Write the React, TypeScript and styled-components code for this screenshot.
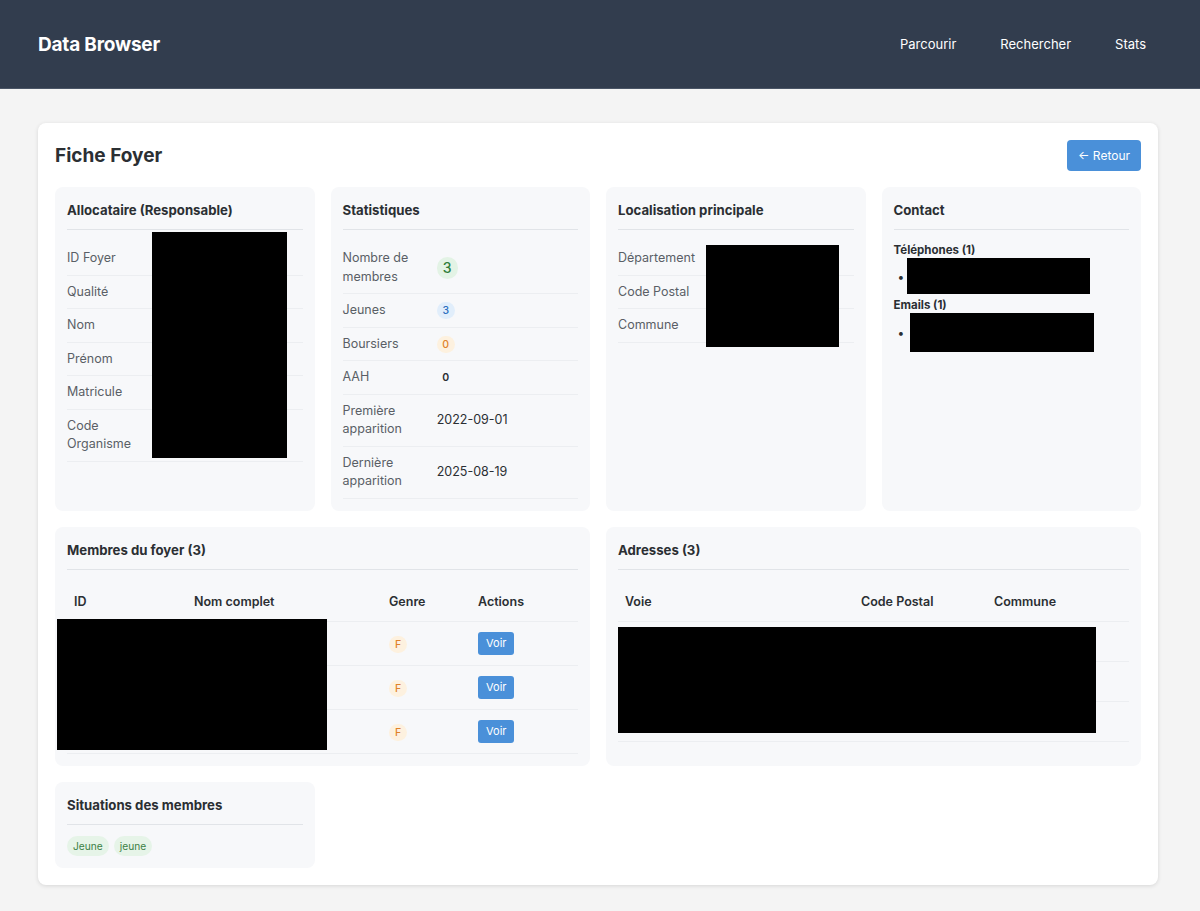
import React from 'react'
import styled, { createGlobalStyle } from 'styled-components'

const GlobalStyle = createGlobalStyle`
  * { box-sizing: border-box; }
  body {
    margin: 0;
    background: #f4f4f4;
    font-family: Inter, "Noto Sans", "Liberation Sans", sans-serif;
    color: #2b2f33;
  }
`

const TopBar = styled.header`
  height: 89px;
  background: #323d4e;
  border-bottom: 1px solid #4a5566;
  display: flex;
  align-items: center;
  justify-content: space-between;
  padding: 0 38px;
`

const Brand = styled.h1`
  margin: 0;
  font-size: 19px;
  font-weight: 700;
  color: #fff;
  letter-spacing: -0.2px;
`

const Nav = styled.nav`
  display: flex;
  gap: 12px;
`

const NavLink = styled.a`
  color: #fff;
  font-size: 13px;
  padding: 8px 16px;
  text-decoration: none;
`

const Main = styled.main`
  padding: 34px 42px 27px 38px;
`

const Sheet = styled.section`
  background: #fff;
  border-radius: 8px;
  box-shadow: 0 1px 4px rgba(0, 0, 0, 0.12);
  padding: 17px;
`

const SheetHead = styled.div`
  display: flex;
  align-items: center;
  justify-content: space-between;
  margin-bottom: 16px;
`

const SheetTitle = styled.h2`
  margin: 0;
  font-size: 19px;
  font-weight: 700;
  color: #2b2f33;
`

const BackButton = styled.button`
  height: 31px;
  padding: 0 11px;
  border: none;
  border-radius: 4px;
  background: #4a90d9;
  color: #fff;
  font-family: inherit;
  font-size: 12px;
`

const Grid = styled.div`
  display: grid;
  grid-template-columns: repeat(4, 1fr);
  gap: 16px;
  align-items: stretch;
`

const Card = styled.div<{ $span?: number }>`
  position: relative;
  grid-column: span ${p => p.$span ?? 1};
  background: #f7f8fa;
  border-radius: 8px;
  padding: 13px 12px 12px;
`

const CardTitle = styled.h3`
  margin: 0 0 12px;
  padding-bottom: 8px;
  border-bottom: 1px solid #e1e4e8;
  font-size: 13.2px;
  line-height: 21px;
  font-weight: 700;
  color: #2b2f33;
`

const InfoTable = styled.table`
  width: 100%;
  border-collapse: collapse;
  font-size: 12.5px;
  line-height: 18.5px;

  tr { border-bottom: 1px solid #eceef1; }
  th {
    width: 40%;
    padding: 7px 8px 7px 0;
    text-align: left;
    font-weight: 400;
    color: #5a5f66;
    vertical-align: middle;
  }
  td {
    padding: 7px 0;
    color: #2b2f33;
    vertical-align: middle;
  }
`

const tones = {
  green: { bg: '#e3f3e5', fg: '#2f7d3a' },
  blue: { bg: '#e1eefb', fg: '#2c6fc0' },
  orange: { bg: '#fdf1df', fg: '#e0822a' },
  plain: { bg: 'transparent', fg: '#2b2f33' },
}

const Badge = styled.span<{ $tone: keyof typeof tones; $big?: boolean }>`
  display: inline-block;
  min-width: ${p => (p.$big ? 21 : 18)}px;
  padding: ${p => (p.$big ? '1px 6px' : '0 5px')};
  border-radius: 11px;
  text-align: center;
  background: ${p => tones[p.$tone].bg};
  color: ${p => tones[p.$tone].fg};
  font-size: ${p => (p.$big ? 14 : 10.5)}px;
  line-height: ${p => (p.$big ? 20 : 17)}px;
  font-weight: ${p => (p.$tone === 'plain' ? 600 : 500)};
`

const Redacted = styled.div<{ $l: number; $t: number; $w: number; $h: number }>`
  position: absolute;
  left: ${p => p.$l}px;
  top: ${p => p.$t}px;
  width: ${p => p.$w}px;
  height: ${p => p.$h}px;
  background: #000;
`

const ContactLabel = styled.div`
  margin-top: 3px;
  font-size: 11.5px;
  font-weight: 700;
  line-height: 16px;
  color: #2b2f33;
`

const ContactList = styled.ul`
  list-style: none;
  margin: 0 0 2px;
  padding: 0;
`

const ContactItem = styled.li<{ $indent: number }>`
  display: flex;
  align-items: center;
  padding-left: 4px;

  &::before {
    content: '•';
    font-size: 12px;
    color: #2b2f33;
    margin-right: ${p => p.$indent}px;
  }
`

const Block = styled.span<{ $w: number; $h: number }>`
  display: inline-block;
  width: ${p => p.$w}px;
  height: ${p => p.$h}px;
  background: #000;
`

const DataTable = styled.table`
  width: 100%;
  border-collapse: collapse;
  font-size: 12.5px;
  line-height: 19px;
  margin-top: 12px;

  th {
    text-align: left;
    font-weight: 600;
    color: #2b2f33;
    padding: 10px 7px;
    border-bottom: 1px solid #eceef1;
  }
  td {
    padding: 10px 7px;
    border-bottom: 1px solid #eceef1;
    vertical-align: middle;
  }
`

const ViewButton = styled.button`
  height: 23px;
  padding: 0 8px;
  border: none;
  border-radius: 3px;
  background: #4a90d9;
  color: #fff;
  font-family: inherit;
  font-size: 11px;
  display: block;
`

const Tags = styled.div`
  display: flex;
  gap: 5px;
  margin-top: -1px;
`

const Tag = styled.span`
  padding: 2px 6px;
  border-radius: 10px;
  background: #e6f4e8;
  color: #3b7f45;
  font-size: 10.2px;
  line-height: 16px;
`

const allocataire = ['ID Foyer', 'Qualité', 'Nom', 'Prénom', 'Matricule', 'Code Organisme']
const localisation = ['Département', 'Code Postal', 'Commune']

export default function App() {
  return (
    <>
      <GlobalStyle />
      <TopBar>
        <Brand>Data Browser</Brand>
        <Nav>
          <NavLink href="#">Parcourir</NavLink>
          <NavLink href="#">Rechercher</NavLink>
          <NavLink href="#">Stats</NavLink>
        </Nav>
      </TopBar>
      <Main>
        <Sheet>
          <SheetHead>
            <SheetTitle>Fiche Foyer</SheetTitle>
            <BackButton>← Retour</BackButton>
          </SheetHead>
          <Grid>
            <Card>
              <CardTitle>Allocataire (Responsable)</CardTitle>
              <InfoTable>
                <tbody>
                  {allocataire.map(l => (
                    <tr key={l}>
                      <th>{l}</th>
                      <td>&nbsp;</td>
                    </tr>
                  ))}
                </tbody>
              </InfoTable>
              <Redacted $l={97} $t={45} $w={135} $h={226} />
            </Card>

            <Card>
              <CardTitle>Statistiques</CardTitle>
              <InfoTable>
                <tbody>
                  <tr>
                    <th>Nombre de membres</th>
                    <td><Badge $tone="green" $big>3</Badge></td>
                  </tr>
                  <tr>
                    <th>Jeunes</th>
                    <td><Badge $tone="blue">3</Badge></td>
                  </tr>
                  <tr>
                    <th>Boursiers</th>
                    <td><Badge $tone="orange">0</Badge></td>
                  </tr>
                  <tr>
                    <th>AAH</th>
                    <td><Badge $tone="plain">0</Badge></td>
                  </tr>
                  <tr>
                    <th>Première apparition</th>
                    <td>2022-09-01</td>
                  </tr>
                  <tr>
                    <th>Dernière apparition</th>
                    <td>2025-08-19</td>
                  </tr>
                </tbody>
              </InfoTable>
            </Card>

            <Card>
              <CardTitle>Localisation principale</CardTitle>
              <InfoTable>
                <tbody>
                  {localisation.map(l => (
                    <tr key={l}>
                      <th>{l}</th>
                      <td>&nbsp;</td>
                    </tr>
                  ))}
                </tbody>
              </InfoTable>
              <Redacted $l={100} $t={58} $w={133} $h={102} />
            </Card>

            <Card>
              <CardTitle>Contact</CardTitle>
              <ContactLabel>Téléphones (1)</ContactLabel>
              <ContactList>
                <ContactItem $indent={3}><Block $w={183} $h={36} /></ContactItem>
              </ContactList>
              <ContactLabel>Emails (1)</ContactLabel>
              <ContactList>
                <ContactItem $indent={6}><Block $w={184} $h={39} /></ContactItem>
              </ContactList>
            </Card>

            <Card $span={2}>
              <CardTitle>Membres du foyer (3)</CardTitle>
              <DataTable>
                <colgroup>
                  <col style={{ width: 120 }} />
                  <col style={{ width: 195 }} />
                  <col style={{ width: 89 }} />
                  <col />
                </colgroup>
                <thead>
                  <tr>
                    <th>ID</th>
                    <th>Nom complet</th>
                    <th>Genre</th>
                    <th>Actions</th>
                  </tr>
                </thead>
                <tbody>
                  {[1, 2, 3].map(i => (
                    <tr key={i}>
                      <td />
                      <td />
                      <td><Badge $tone="orange">F</Badge></td>
                      <td><ViewButton>Voir</ViewButton></td>
                    </tr>
                  ))}
                </tbody>
              </DataTable>
              <Redacted $l={2} $t={92} $w={270} $h={131} />
            </Card>

            <Card $span={2}>
              <CardTitle>Adresses (3)</CardTitle>
              <DataTable>
                <colgroup>
                  <col style={{ width: 236 }} />
                  <col style={{ width: 133 }} />
                  <col />
                </colgroup>
                <thead>
                  <tr>
                    <th>Voie</th>
                    <th>Code Postal</th>
                    <th>Commune</th>
                  </tr>
                </thead>
                <tbody>
                  {[1, 2, 3].map(i => (
                    <tr key={i}>
                      <td>&nbsp;</td>
                      <td />
                      <td />
                    </tr>
                  ))}
                </tbody>
              </DataTable>
              <Redacted $l={12} $t={100} $w={478} $h={106} />
            </Card>

            <Card>
              <CardTitle>Situations des membres</CardTitle>
              <Tags>
                <Tag>Jeune</Tag>
                <Tag>jeune</Tag>
              </Tags>
            </Card>
          </Grid>
        </Sheet>
      </Main>
    </>
  )
}
